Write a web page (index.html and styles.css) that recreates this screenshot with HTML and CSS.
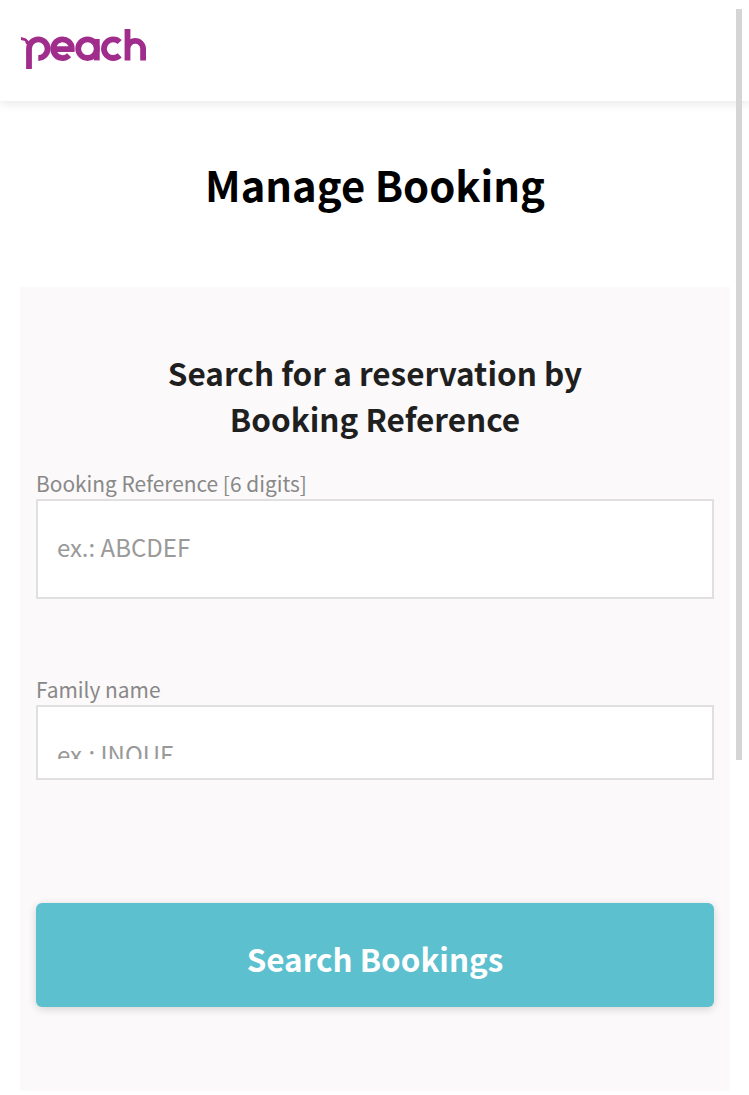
FILE: index.html
```html
<!DOCTYPE html>
<html lang="en">
<head>
<meta charset="utf-8">
<title>Manage Booking</title>
<link rel="stylesheet" href="styles.css">
</head>
<body>
<header class="site-header">
  <svg class="logo" width="126" height="42" viewBox="0 0 126 42" aria-label="peach" role="img">
    <g fill="none" stroke="#a02d8c" stroke-width="5.8">
      <path d="M9 42V21.700a9.300 9.300 0 1 1 9.300 9.300"/>
      <path d="M33.200 22.200H51.800a9.300 9.300 0 1 0-2.700 6.100"/>
      <circle cx="67.500" cy="21.700" r="9.300"/>
      <path d="M76.800 12V33.400"/>
      <path d="M99.700 15a9.300 9.300 0 1 0 0 13.400"/>
      <path d="M107.500 2V33.400M107.500 21.700a7.800 7.800 0 0 1 15.600 0V33.400"/>
    </g>
    <path d="M1 10l5 1.500l3 3l-1 3l-2-.5l-1-3l-4-1z" fill="#a02d8c"/>
  </svg>
</header>
<main class="content">
  <h1 class="page-title">Manage Booking</h1>
  <section class="panel">
    <h2 class="panel-title">Search for a reservation by<br>Booking Reference</h2>
    <form class="form">
      <div class="field">
        <label class="field-label" for="ref">Booking Reference [6 digits]</label>
        <div class="field-box field-box-full"><input class="field-input" id="ref" type="text" placeholder="ex.: ABCDEF"></div>
      </div>
      <div class="field field-second">
        <label class="field-label" for="name">Family name</label>
        <div class="field-box field-box-cut"><input class="field-input field-input-cut" id="name" type="text" placeholder="ex.: INOUE"></div>
      </div>
      <button class="submit" type="button">Search Bookings</button>
    </form>
  </section>
</main>
<div class="scrollbar"></div>
</body>
</html>
```
FILE: styles.css
```css
* { box-sizing: border-box; }
html, body { margin: 0; padding: 0; height: 100%; overflow: hidden; }
body {
  background: #fff;
  font-family: "Noto Sans CJK JP", "Noto Sans", sans-serif;
  color: #000;
  position: relative;
}
.site-header {
  height: 101px;
  padding: 27px 0 0 20px;
  background: #fff;
  box-shadow: 0 2px 10px rgba(0, 0, 0, 0.1);
}
.logo { display: block; }
.content { padding: 0 19px 0 20px; }
.page-title {
  margin: 0;
  height: 186px;
  padding-top: 51px;
  font-size: 41.750px;
  line-height: 64px;
  font-weight: 700;
  text-align: center;
}
.panel {
  height: 804px;
  padding: 62px 16px 0;
  background: #fbf9fa;
}
.panel-title {
  margin: 0 0 26px;
  font-size: 31.500px;
  line-height: 46px;
  font-weight: 700;
  color: #1f1f1f;
  text-align: center;
}
.form { display: flex; flex-direction: column; }
.field { display: flex; flex-direction: column; }
.field-second { margin-top: 74px; }
.field-label {
  font-size: 20.900px;
  line-height: 32px;
  color: #888;
}
.field-box {
  border: 2px solid #e0e0e0;
  background: #fff;
  overflow: hidden;
}
.field-box-full { height: 100px; }
.field-box-cut { height: 75px; }
.field-input {
  display: block;
  width: 100%;
  height: 96px;
  padding: 0 19px 6px;
  border: 0;
  outline: 0;
  background: transparent;
  font: inherit;
  font-size: 24px;
  color: #333;
}
.field-input-cut { height: 52px; padding: 41px 19px 0; }
.field-input::placeholder { color: #999; opacity: 1; }
.submit {
  margin-top: 123px;
  height: 104px;
  padding: 6px 0 0;
  border: 0;
  border-radius: 6px;
  background: #5cc0cf;
  box-shadow: 0 2px 8px rgba(0, 0, 0, 0.16);
  font: inherit;
  font-size: 31.400px;
  font-weight: 700;
  color: #fff;
}
.scrollbar {
  position: absolute;
  left: 736px;
  top: 9px;
  width: 6px;
  height: 751px;
  background: #d5d5d5;
}
```
